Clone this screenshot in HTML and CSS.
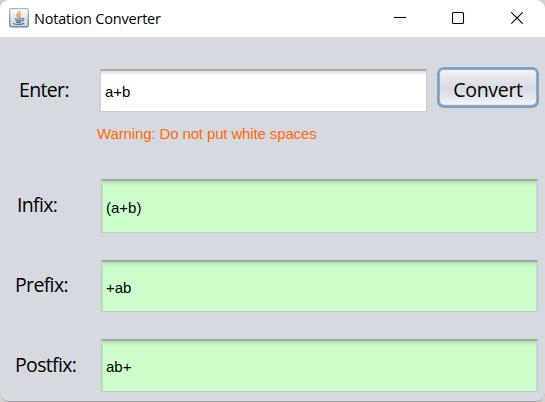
FILE: index.html
```
<!DOCTYPE html>
<html lang="en">
<head>
<meta charset="utf-8">
<title>Notation Converter</title>
<link rel="stylesheet" href="styles.css">
</head>
<body>
<div class="window">
  <header class="titlebar">
    <svg class="app-icon" width="20" height="20" viewBox="0 0 20 20">
      <defs><linearGradient id="tile" x1="0" y1="0" x2="0" y2="1"><stop offset="0" stop-color="#fff"/><stop offset="1" stop-color="#c9d2da"/></linearGradient>
      <linearGradient id="edge" x1="0" y1="0" x2="0" y2="1"><stop offset="0" stop-color="#aab7c2"/><stop offset="1" stop-color="#58788f"/></linearGradient></defs>
      <rect x=".7" y=".7" width="18.6" height="18.1" rx="1.5" fill="url(#tile)" stroke="url(#edge)" stroke-width="1.2"/>
      <path d="M10.6 3c.7 2-3.8 2.800-2.500 5l1.200 1.500M12.300 5.800c-2.500.9-2.600 1.700-1.600 2.600.5.500.1 1.100-.3 1.500" fill="none" stroke="#ee8a3a" stroke-width="1.300"/>
      <path d="M5.800 10.500c1.500.8 5.500.8 7.200 0M6.500 12.300c1.500.8 4.500.8 6 0M7.200 14c1.400.6 3.400.6 4.800 0M13 10.500c2.800-.6 2.200 2.200-.2 2.800M4.500 15c-1 1.800 8.500 1.800 10.500.2" fill="none" stroke="#507a9c" stroke-width="1.100"/>
    </svg>
    <span class="title">Notation Converter</span>
    <div class="controls">
      <svg width="12" height="12" viewBox="0 0 12 12"><path d="M0 5.500h12"/></svg>
      <svg width="12" height="12" viewBox="0 0 12 12"><rect x=".5" y=".5" width="11" height="11" rx="1"/></svg>
      <svg width="12" height="12" viewBox="0 0 12 12"><path d="M.3.3l11.400 11.400M11.700.3L.3 11.700"/></svg>
    </div>
  </header>
  <main class="form">
    <div class="row row-enter">
      <label class="label label-enter" for="expr">Enter:</label>
      <input class="field input" id="expr" value="a+b">
      <button class="convert"><span class="convert-text">Convert</span></button>
    </div>
    <p class="warning">Warning: Do not put white spaces</p>
    <div class="row row-infix">
      <span class="label label-infix">Infix:</span>
      <output class="field result">(a+b)</output>
    </div>
    <div class="row row-prefix">
      <span class="label label-prefix">Prefix:</span>
      <output class="field result">+ab</output>
    </div>
    <div class="row row-postfix">
      <span class="label label-postfix">Postfix:</span>
      <output class="field result">ab+</output>
    </div>
  </main>
</div>
</body>
</html>
```
FILE: styles.css
```
* { box-sizing: border-box; }
body { margin: 0; background: #d2d2d2; overflow: hidden; }
.window {
  width: 545px;
  height: 402px;
  overflow: hidden;
  background: #d6d9e0;
  border-radius: 9px;
  border-bottom: 1px solid #a0a2a6;
  color: #000;
}
.titlebar {
  display: flex;
  align-items: center;
  height: 37px;
  padding: 0 22px 0 9px;
  background: #fff;
}
.app-icon { flex: none; margin-top: -2px; }
.title {
  margin-left: 5px;
  font: 14.5px/20px "Open Sans", sans-serif;
  letter-spacing: -0.2px;
  white-space: nowrap;
}
.controls { display: flex; gap: 47px; margin-left: auto; margin-top: -1px; }
.controls svg { fill: none; stroke: #000; stroke-width: 1.1; overflow: visible; }
.controls svg:first-child { margin-right: -1px; }
.form { padding-top: 30px; }
.row { display: flex; align-items: stretch; padding-right: 7px; }
.label {
  flex: none;
  width: 101px;
  margin-top: -2px;
  font: 19.5px/26px "Open Sans", sans-serif;
  letter-spacing: -0.65px;
  white-space: nowrap;
  align-self: center;
}
.field {
  display: flex;
  align-items: center;
  flex: 1;
  min-width: 0;
  margin: 0;
  padding: 0 4px;
  border: 1px solid #c9cbd0;
  border-top: 2px solid #a9abaf;
  border-radius: 0;
  outline: 0;
  color: #000;
  font: 15px/18px "Liberation Sans", sans-serif;
}
.input { background: linear-gradient(#dcdcdc, #f6f6f6 3px, #fff 5px); }
.result {
  background: linear-gradient(#b4dcb4, #c5f5c5 3px, #cfc 6px);
  border-color: #9dac9f #bdcdbf #bdcdbf;
  box-shadow: inset 1px 0 #c3e2c4, inset -1px 0 #c3e2c4;
}
.row-enter { height: 42px; padding-right: 5px; }
.row-enter .input { flex: none; width: 327px; height: 43px; margin-top: 2px; padding-top: 1px; }
.label-enter { width: 100px; padding-left: 19px; margin-top: 4px; }
.convert {
  width: 102px;
  height: 41px;
  margin-left: 10px;
  padding: 0;
  border: 2px solid #78a2c8;
  border-radius: 7px;
  background: linear-gradient(#f8f9fb 0%, #e5e7ed 25%, #d7dae2 52%, #dfe2e9 70%, #f5f8fc 100%);
  box-shadow: inset 0 0 0 1px #9ba7b8, inset 0 -1px 1px 0 #59687d;
  color: #000;
  font: 19.5px/26px "Open Sans", sans-serif;
  letter-spacing: -0.3px;
}
.convert-text { display: block; padding-top: 4px; }
.warning {
  margin: 16px 0 0 97px;
  font: 15px/18px "Liberation Sans", sans-serif;
  letter-spacing: -0.13px;
  color: #ff6a0a;
}
.row-infix { height: 54px; margin-top: 36px; }
.row-prefix { height: 52px; margin-top: 27px; }
.row-postfix { height: 53px; margin-top: 27px; }
.label-infix { padding-left: 17px; }
.label-prefix, .label-postfix { padding-left: 15px; }
.result { padding-top: 2px; }
```
